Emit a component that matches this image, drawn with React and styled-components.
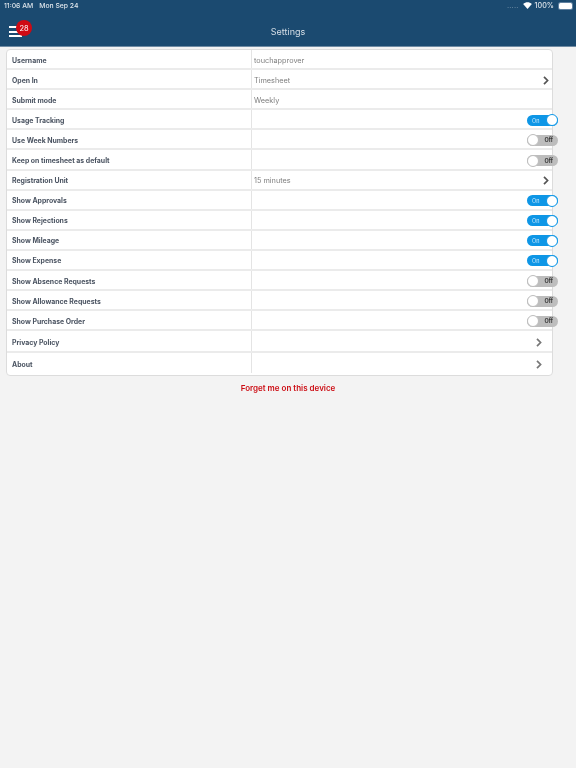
import React from 'react';
import styled, { createGlobalStyle } from 'styled-components';

const GlobalStyle = createGlobalStyle`
  html, body {
    margin: 0;
    padding: 0;
    background: #f3f3f3;
    font-family: Inter, Roboto, "Liberation Sans", sans-serif;
  }
`;

const Page = styled.div`
  width: 576px;
  height: 768px;
  display: flex;
  flex-direction: column;
  overflow: hidden;
  will-change: transform;
`;
const Header = styled.header`
  height: 47px;
  box-sizing: border-box;
  background: #1b4a70;
  border-bottom: 1px solid #6f8ba3;
  color: #fff;
  display: flex;
  flex-direction: column;
`;
const StatusBar = styled.div`
  height: 11px;
  display: flex;
  align-items: center;
  justify-content: space-between;
  padding: 0 4px;
  font-size: 6.8px;
  font-weight: 500;
  color: #dfe6ec;
`;
const StatusLeft = styled.span`
  & > b {
    font-weight: 500;
    margin-left: 6px;
  }
`;
const StatusRight = styled.div`
  display: flex;
  align-items: center;
  gap: 3px;
  font-size: 7.2px;
`;
const Dots = styled.span`
  color: #7f9ab0;
  font-size: 7px;
  letter-spacing: 0.2px;
  margin-right: 1px;
`;
const Battery = styled.span`
  width: 13px;
  height: 6px;
  border-radius: 1.5px;
  background: #fff;
  box-shadow: 0 0 0 1px #5f80a0;
  margin-left: 2px;
`;
const NavBar = styled.div`
  flex: 1;
  position: relative;
  display: flex;
  align-items: center;
  justify-content: center;
  font-size: 9px;
  color: #d5dee6;
  padding-top: 5px;
`;
const Menu = styled.div`
  position: absolute;
  left: 9px;
  top: 15px;
  width: 13px;
  display: flex;
  flex-direction: column;
  gap: 2.5px;
  & > i {
    display: block;
    height: 2px;
    background: #fff;
  }
`;
const Badge = styled.span`
  position: absolute;
  left: 16px;
  top: 9px;
  width: 16px;
  height: 16px;
  border-radius: 50%;
  background: #cf0a14;
  color: #fff;
  font-size: 7.5px;
  display: flex;
  align-items: center;
  justify-content: center;
`;
const Card = styled.section`
  width: 547px;
  margin: 2px 0 0 6px;
  background: #fff;
  border: 1px solid #dcdcdc;
  border-radius: 4px;
  box-sizing: border-box;
`;
const Row = styled.div`
  height: ${p => (p.$tall ? '22px' : '20.1px')};
  display: grid;
  grid-template-columns: 245px 1fr;
  box-sizing: border-box;
  border-bottom: 2px solid ${p => (p.$last ? 'transparent' : '#ebebeb')};
`;
const Label = styled.div`
  display: flex;
  align-items: center;
  padding: 2px 0 0 5px;
  font-size: 6.9px;
  font-weight: 700;
  color: #4a5361;
  border-right: 1px solid #e4e4e4;
`;
const Value = styled.div`
  display: flex;
  align-items: center;
  justify-content: space-between;
  padding: 2px 0 0 2px;
  font-size: 7.3px;
  color: #7f7f7f;
`;
const Chevron = styled.svg`
  width: 6px;
  height: 9px;
  margin-right: ${p => (p.$inset ? '10px' : '3px')};
  fill: none;
  stroke: ${p => (p.$inset ? '#777' : '#555')};
  stroke-width: 1.7;
`;
const Toggle = styled.div`
  width: 31px;
  height: 11px;
  margin: 0 -6px 0 auto;
  box-sizing: border-box;
  border-radius: 6px;
  position: relative;
  display: flex;
  align-items: center;
  font-size: 5.5px;
  background: ${p => (p.$on ? '#0e96e6' : '#bdbdbd')};
  color: ${p => (p.$on ? '#cfeafb' : '#333')};
  justify-content: ${p => (p.$on ? 'flex-start' : 'flex-end')};
  padding: ${p => (p.$on ? '1px 0 0 5px' : '0 5px 0 0')};
  font-weight: ${p => (p.$on ? 400 : 700)};
`;
const Knob = styled.span`
  position: absolute;
  top: -0.5px;
  width: 12px;
  height: 12px;
  box-sizing: border-box;
  border-radius: 50%;
  background: #fff;
  border: 1px solid ${p => (p.$on ? '#0e96e6' : '#bdbdbd')};
  ${p => (p.$on ? 'right: 0;' : 'left: 0;')}
`;
const Forget = styled.div`
  margin-top: 7px;
  text-align: center;
  font-size: 8px;
  font-weight: 600;
  color: #cc0d14;
`;

const rows = [
  { label: 'Username', value: 'touchapprover' },
  { label: 'Open In', value: 'Timesheet', link: true },
  { label: 'Submit mode', value: 'Weekly' },
  { label: 'Usage Tracking', on: true },
  { label: 'Use Week Numbers', on: false },
  { label: 'Keep on timesheet as default', on: false },
  { label: 'Registration Unit', value: '15 minutes', link: true },
  { label: 'Show Approvals', on: true },
  { label: 'Show Rejections', on: true },
  { label: 'Show Mileage', on: true },
  { label: 'Show Expense', on: true },
  { label: 'Show Absence Requests', on: false },
  { label: 'Show Allowance Requests', on: false },
  { label: 'Show Purchase Order', on: false },
  { label: 'Privacy Policy', page: true },
  { label: 'About', page: true, last: true },
];

const Arrow = ({ inset }) => (
  <Chevron $inset={inset} viewBox="0 0 6 9">
    <path d="M1 0.8 L4.6 4.5 L1 8.2" />
  </Chevron>
);

const App = () => (
  <Page>
    <GlobalStyle />
    <Header>
      <StatusBar>
        <StatusLeft>11:06 AM<b>Mon Sep 24</b></StatusLeft>
        <StatusRight>
          <Dots>.....</Dots>
          <svg width="9" height="7" viewBox="0 0 10 8" fill="#fff">
            <path d="M5 8 L0 2.4 C3 -0.6 7 -0.6 10 2.4 Z" />
          </svg>
          <span>100%</span>
          <Battery />
        </StatusRight>
      </StatusBar>
      <NavBar>
        <Menu><i /><i /><i /></Menu>
        <Badge>28</Badge>
        Settings
      </NavBar>
    </Header>
    <Card>
      {rows.map(r => (
        <Row key={r.label} $tall={r.page} $last={r.last}>
          <Label>{r.label}</Label>
          <Value>
            {r.value}
            {r.link && <Arrow />}
            {r.page && <><span /><Arrow inset /></>}
            {r.on !== undefined && (
              <Toggle $on={r.on}>
                {r.on ? 'On' : 'Off'}
                <Knob $on={r.on} />
              </Toggle>
            )}
          </Value>
        </Row>
      ))}
    </Card>
    <Forget>Forget me on this device</Forget>
  </Page>
);

export default App;
